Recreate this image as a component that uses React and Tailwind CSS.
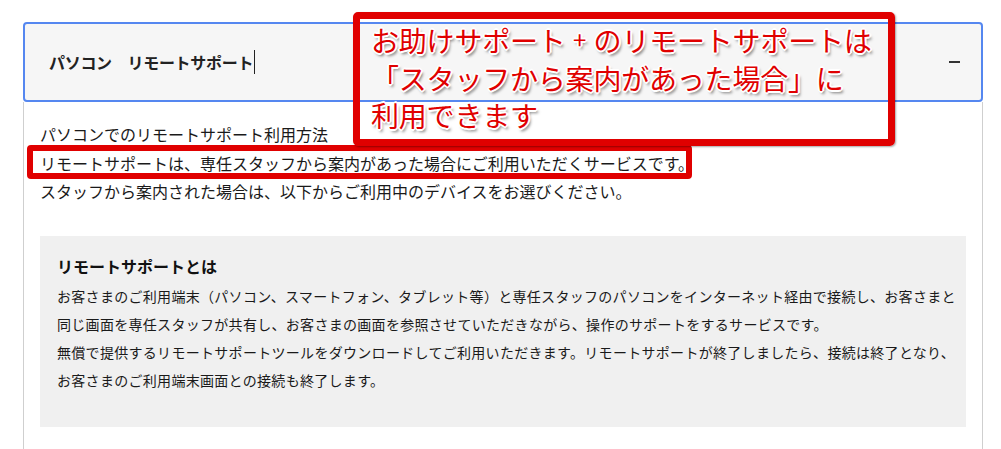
import React from "react";

const jp = { fontFamily: '"Noto Sans CJK JP", "Noto Sans", sans-serif' };

export default function App() {
  return (
    <div className="relative min-h-screen bg-white text-[#222]" style={jp}>
      <div className="ml-[23px] w-[960px] pt-[22px]">
        {/* accordion header */}
        <div className="flex h-[80px] items-center justify-between rounded-[4px] border-2 border-[#5587f0] bg-[#f6f6f6] pl-[24px] pr-[21px]">
          <div className="flex items-center text-[16px] font-bold tracking-[-0.3px] text-[#222]">
            <span>パソコン　リモートサポート</span>
            <span className="ml-[1px] h-[24px] w-[1px] bg-[#222]" />
          </div>
          <span className="h-[2px] w-[11px] bg-[#333]" />
        </div>

        {/* accordion body */}
        <div className="border-x border-[#cfcfcf] px-[16px] pt-[18px] pb-[22px]">
          <div className="text-[16px] leading-[28.5px] text-[#1a1a1a]">
            <p>パソコンでのリモートサポート利用方法</p>
            <p className="relative">
              リモートサポートは、専任スタッフから案内があった場合にご利用いただくサービスです。
              <span className="pointer-events-none absolute -top-[4px] -bottom-[2px] -left-[13px] w-[665px] rounded-[4px] border-[6px] border-[#e00000]" />
            </p>
            <p>スタッフから案内された場合は、以下からご利用中のデバイスをお選びください。</p>
          </div>

          <div className="mt-[30px] bg-[#f0f0f0] pl-[17px] pr-[10px] pt-[16px] pb-[33px]">
            <h3 className="text-[16px] font-bold leading-[28px] text-[#111]">リモートサポートとは</h3>
            <div className="mt-[2px] text-[14px] leading-[28px] tracking-[0.3px] text-[#1a1a1a]">
              <p>
                お客さまのご利用端末（パソコン、スマートフォン、タブレット等）と専任スタッフのパソコンをインターネット経由で接続し、お客さまと同じ画面を専任スタッフが共有し、お客さまの画面を参照させていただきながら、操作のサポートをするサービスです。
              </p>
              <p>
                無償で提供するリモートサポートツールをダウンロードしてご利用いただきます。リモートサポートが終了しましたら、接続は終了となり、お客さまのご利用端末画面との接続も終了します。
              </p>
            </div>
          </div>
          <div className="h-[20px]" />
        </div>
      </div>

      {/* callout annotation */}
      <div className="absolute left-[353px] top-[12px] h-[134px] w-[542px] rounded-[5px] border-[7px] border-[#e00000] pl-[11px] pt-[3px] shadow-[1px_1px_2px_rgba(0,0,0,0.35)]">
        <div className="text-[28px] leading-[37px] tracking-[-0.2px] text-[#e00000] [text-shadow:-2px_0_0_#fff,2px_0_0_#fff,0_-2px_0_#fff,0_2px_0_#fff,-1px_-1px_0_#fff,1px_1px_0_#fff,-1px_1px_0_#fff,1px_-1px_0_#fff,2px_3px_3px_rgba(0,0,0,0.55)]">
          <div>
            お助けサポート
            <span className="relative -top-[3px] inline-block w-[28px] text-center text-[24px]">+</span>
            のリモートサポートは
          </div>
          <div>「スタッフから案内があった場合」に</div>
          <div>利用できます</div>
        </div>
      </div>
    </div>
  );
}
